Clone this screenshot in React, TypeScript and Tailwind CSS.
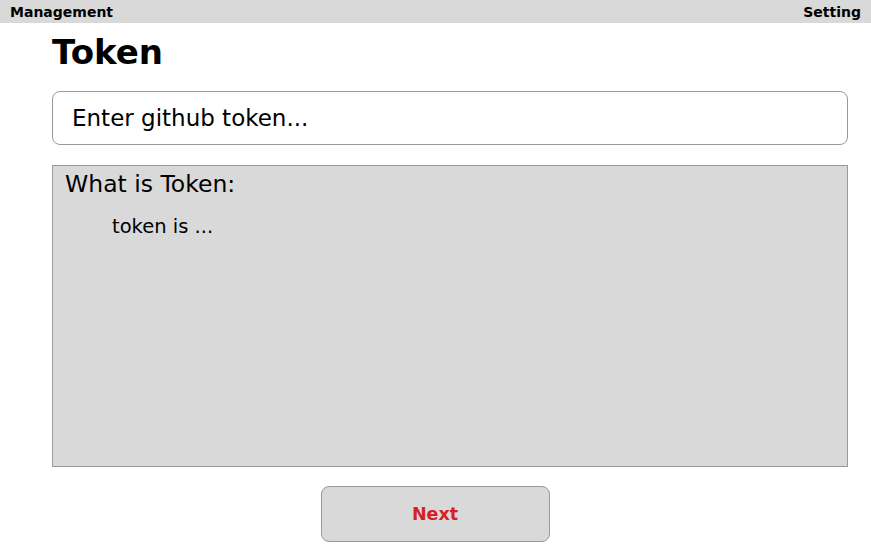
import React from 'react';

const font = { fontFamily: '"DejaVu Sans", "Noto Sans", sans-serif' };

const App: React.FC = () => {
  return (
    <div className="w-[871px] h-[557px] bg-white text-black" style={font}>
      <div className="h-[23px] bg-[#d9d9d9] flex items-center justify-between px-[10px]">
        <span className="text-[14px] font-bold leading-none">Management</span>
        <span className="text-[14px] font-bold leading-none">Setting</span>
      </div>

      <div className="pl-[52px]">
        <h1 className="text-[34px] font-bold leading-none mt-[10px] h-[58px] pt-[2px]">Token</h1>

        <input
          className="w-[796px] h-[54px] border border-[#999] rounded-[8px] px-[19px] text-[23px] placeholder:text-black outline-none"
          placeholder="Enter github token..."
        />

        <div className="w-[796px] h-[302px] mt-[20px] bg-[#d9d9d9] border border-[#999]">
          <p className="text-[23.5px] leading-none pl-[12px] pt-[7px]">What is Token:</p>
          <p className="text-[19.5px] leading-none pl-[59px] pt-[20px]">token is ...</p>
        </div>

        <div className="w-[796px] flex justify-center mt-[19px]">
          <button className="w-[229px] h-[56px] ml-[-30px] bg-[#d9d9d9] border border-[#999] rounded-[8px] text-[#d42222] text-[17.5px] font-bold">
            Next
          </button>
        </div>
      </div>
    </div>
  );
};

export default App;
